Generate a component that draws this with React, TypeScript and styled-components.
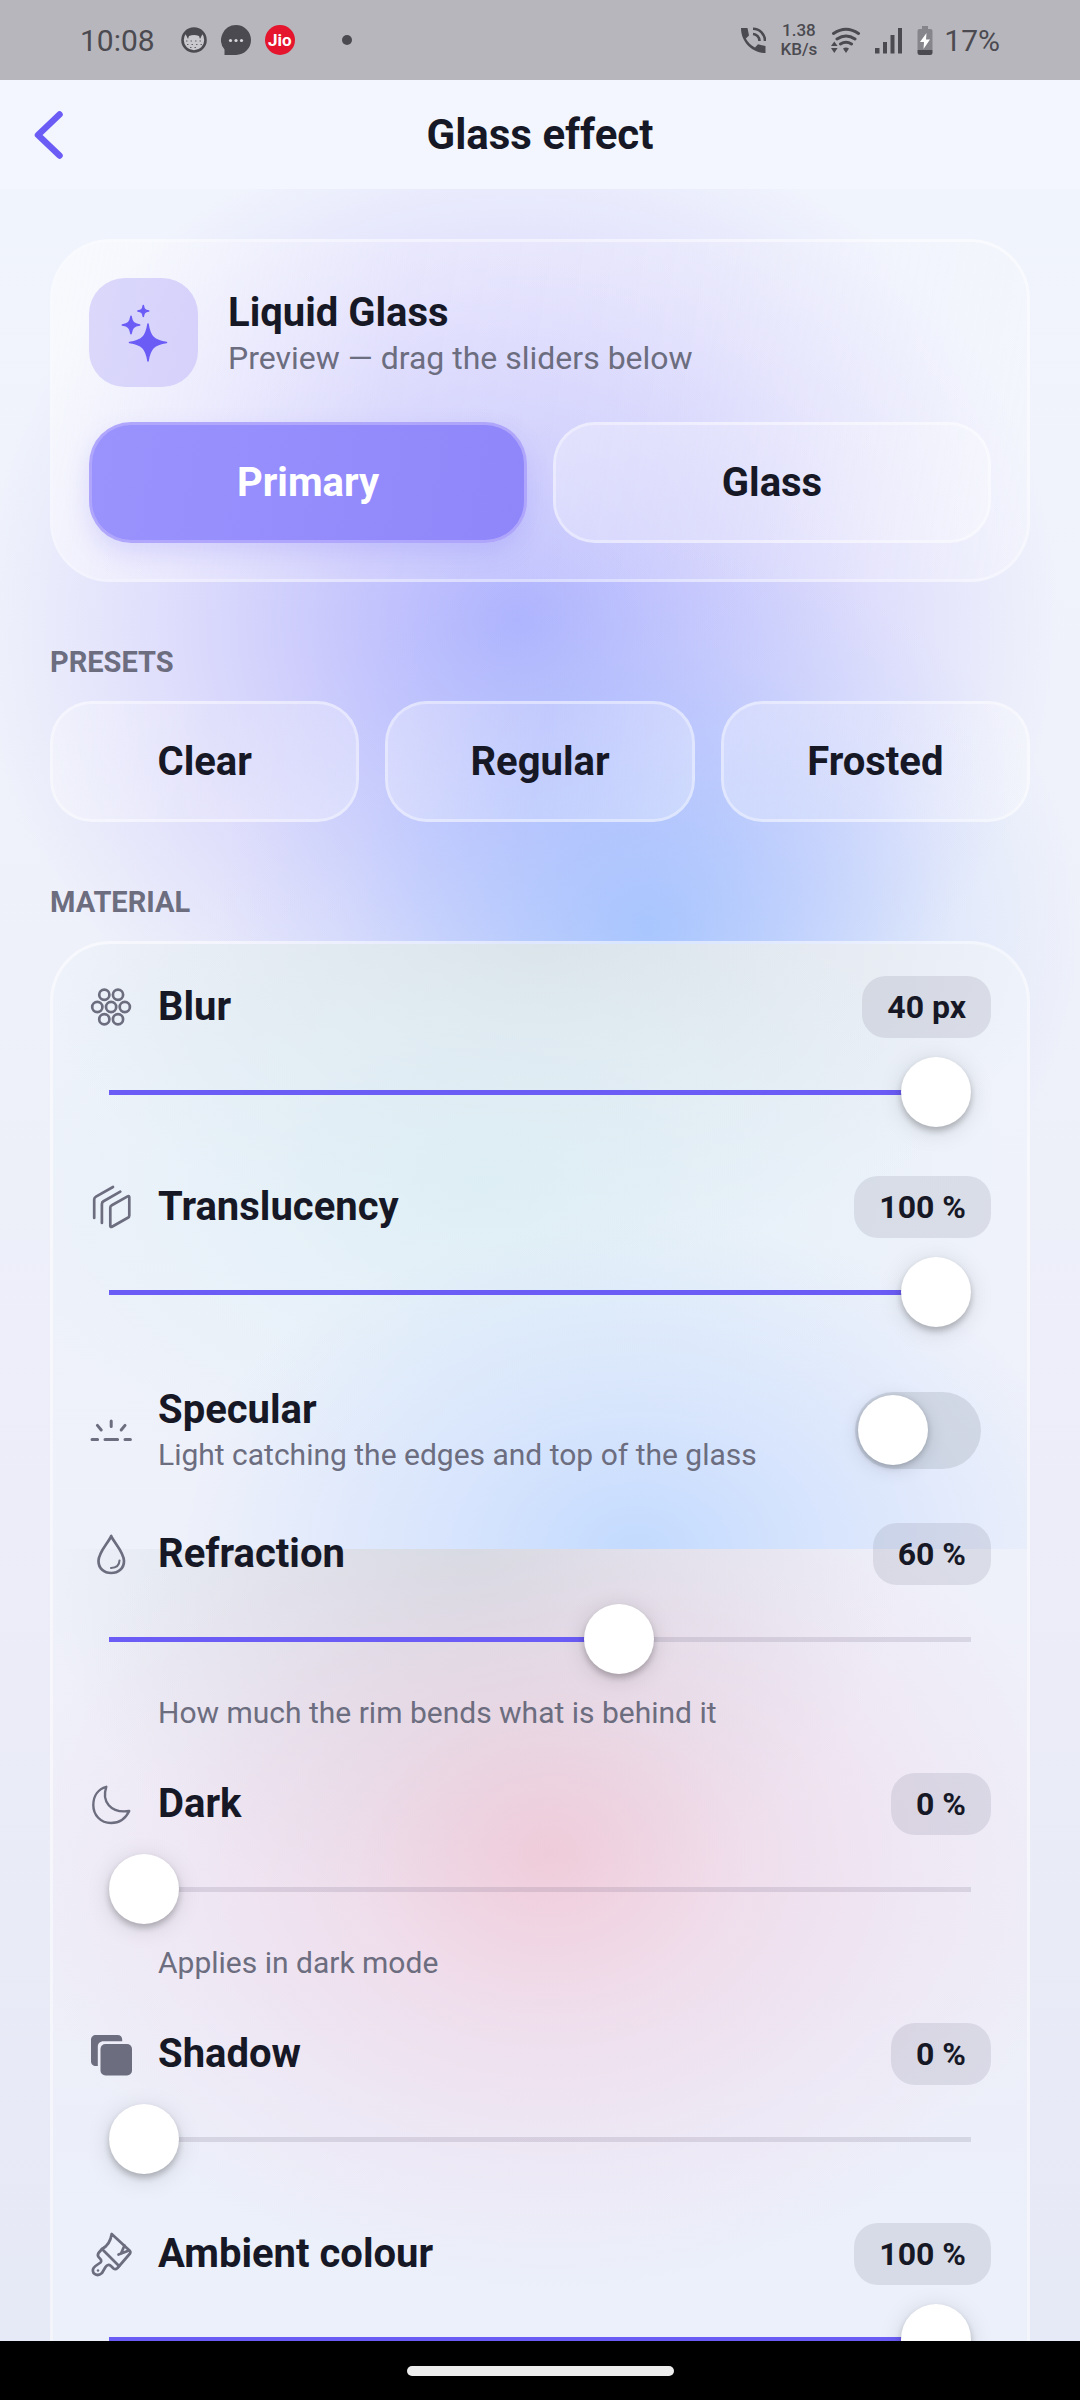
import React, { useId, useState } from "react";
import styled, { createGlobalStyle } from "styled-components";

const ink = "#171826";
const muted = "#6c6d7f";
const accent = "#6b5cf6";

const GlobalStyle = createGlobalStyle`
  *, *::before, *::after { box-sizing: border-box; }
  body { margin: 0; }
  button, input { font: inherit; }
`;

const Screen = styled.div`
  display: flex;
  flex-direction: column;
  height: 100vh;
  overflow: hidden;
  font-family: Roboto, "Noto Sans", sans-serif;
  color: ${ink};
  background:
    radial-gradient(ellipse 40% 390px at 60% 930px, rgba(150, 190, 255, 0.74) 0%, rgba(155, 190, 255, 0.48) 35%, rgba(165, 198, 255, 0.16) 72%, rgba(170, 210, 255, 0) 100%),
    radial-gradient(ellipse 50% 510px at 48% 620px, rgba(142, 146, 255, 0.66) 0%, rgba(156, 152, 255, 0.48) 32%, rgba(180, 168, 255, 0.27) 66%, rgba(200, 190, 255, 0) 100%),
    linear-gradient(180deg, #f1f5fd 0, #eff2fb 700px, #ecedf8 1500px, #e6e9f6 2340px);
`;

const StatusBar = styled.div`
  display: flex;
  flex: none;
  align-items: center;
  justify-content: space-between;
  height: 80px;
  padding: 0 80px;
  background: #b7b6bc;
  color: #4b4a50;
  font-size: 30px;
`;

const StatusGroup = styled.div<{ $gap: number }>`
  display: flex;
  align-items: center;
  gap: ${(p) => p.$gap}px;
`;

const Clock = styled.span`
  margin-right: 12px;
`;

const JioBadge = styled.span`
  width: 30px;
  border-radius: 50%;
  background: #e4152c;
  color: #fff;
  font-size: 17px;
  font-weight: 700;
  line-height: 30px;
  text-align: center;
`;

const MoreDot = styled.span`
  width: 10px;
  height: 10px;
  margin-left: 33px;
  border-radius: 50%;
  background: currentColor;
`;

const NetSpeed = styled.span`
  font-size: 17px;
  font-weight: 500;
  line-height: 19px;
  text-align: center;
`;

const Header = styled.header`
  display: grid;
  flex: none;
  grid-template-columns: 96px 1fr 96px;
  align-items: center;
  height: 109px;
  background: rgba(243, 246, 254, 0.96);
`;

const BackButton = styled.button`
  display: flex;
  align-items: center;
  height: 96px;
  padding: 0 0 0 30px;
  border: 0;
  background: none;
  color: ${accent};
`;

const PageTitle = styled.h1`
  margin: 0;
  font-size: 42px;
  line-height: 50px;
  text-align: center;
`;

const Content = styled.main`
  flex: 1;
  min-height: 0;
  overflow: hidden;
  padding: 50px 50px 0;
`;

const PreviewCard = styled.section`
  padding: 36px;
  border: 3px solid rgba(255, 255, 255, 0.5);
  border-radius: 60px;
  background: linear-gradient(100deg, rgba(255, 255, 255, 0.5) 0%, rgba(245, 240, 255, 0.26) 35%, rgba(245, 243, 255, 0.22) 65%, rgba(250, 250, 255, 0.36) 100%);
  background-clip: padding-box;
`;

const PreviewHead = styled.div`
  display: flex;
  align-items: center;
  gap: 30px;
  margin-bottom: 35px;
`;

const IconTile = styled.div`
  display: flex;
  align-items: center;
  justify-content: center;
  width: 109px;
  height: 109px;
  border-radius: 36px;
  background: linear-gradient(100deg, #dbd8fb, #d5d1fb);
  color: ${accent};
`;

const PreviewText = styled.div`
  padding-top: 2px;
`;

const Title = styled.h2`
  margin: 0;
  font-size: 40px;
  font-weight: 700;
  line-height: 48px;
`;

const Caption = styled.p<{ $large?: boolean }>`
  margin: 0;
  color: ${muted};
  font-size: ${(p) => (p.$large ? 32 : 30)}px;
  line-height: 42px;
`;

const ButtonRow = styled.div`
  display: grid;
  grid-auto-flow: column;
  grid-auto-columns: 1fr;
  gap: 26px;
`;

const GlassButton = styled.button<{ $primary?: boolean }>`
  height: 121px;
  padding: 0;
  border: 3px solid ${(p) => (p.$primary ? "rgba(178, 170, 252, 0.9)" : "rgba(255, 255, 255, 0.55)")};
  border-radius: 42px;
  background: ${(p) =>
    p.$primary
      ? "linear-gradient(100deg, #9a93fd, #8f86fa)"
      : "linear-gradient(100deg, rgba(255, 255, 255, 0.32), rgba(255, 255, 255, 0.18) 50%, rgba(255, 255, 255, 0.32))"};
  background-clip: ${(p) => (p.$primary ? "border-box" : "padding-box")};
  box-shadow: ${(p) => (p.$primary ? "0 10px 24px rgba(108, 92, 246, 0.17)" : "none")};
  color: ${(p) => (p.$primary ? "#fff" : ink)};
  font-size: 40px;
  font-weight: 700;
`;

const SectionLabel = styled.h3`
  margin: 0;
  padding: 62px 0 21px;
  color: ${muted};
  font-size: 29px;
  font-weight: 700;
  line-height: 36px;
`;

const MaterialCard = styled.section`
  display: flex;
  flex-direction: column;
  gap: 27px;
  padding: 32px 36px 60px;
  border: 3px solid rgba(255, 255, 255, 0.55);
  border-radius: 60px;
  background:
    radial-gradient(ellipse 48% 330px at 60% 605px, rgba(190, 216, 255, 0.9) 0%, rgba(200, 220, 255, 0.6) 40%, rgba(222, 230, 255, 0) 100%) top / 100% 605px no-repeat,
    radial-gradient(ellipse 54% 320px at 44% 240px, rgba(218, 238, 244, 0.78) 0%, rgba(224, 240, 247, 0.44) 55%, rgba(235, 242, 250, 0) 100%) top / 100% 605px no-repeat,
    radial-gradient(ellipse 52% 320px at 50% 0, rgba(210, 219, 224, 0.78) 0%, rgba(218, 225, 231, 0.5) 50%, rgba(235, 240, 248, 0) 100%) top / 100% 605px no-repeat,
    linear-gradient(#eff3fb, #eff1fa) top / 100% 605px no-repeat,
    radial-gradient(ellipse 54% 440px at 51% 910px, rgba(242, 192, 208, 0.72) 0%, rgba(241, 205, 224, 0.48) 38%, rgba(240, 216, 236, 0.28) 72%, rgba(240, 230, 244, 0) 100%),
    radial-gradient(ellipse 44% 380px at 43% 605px, rgba(206, 219, 223, 1) 0%, rgba(214, 222, 228, 0.72) 42%, rgba(235, 238, 247, 0) 100%),
    linear-gradient(#eff1fa 605px, #eeeef8 1000px, #ebf0fa 1300px);
  background-clip: padding-box;
`;

const Row = styled.div`
  display: block;
`;

const RowHead = styled.div`
  display: flex;
  align-items: center;
  gap: 25px;
  height: 62px;
`;

const RowLabel = styled.label`
  flex: 1;
  font-size: 40px;
  font-weight: 700;
  line-height: 48px;
`;

const ValueBadge = styled.output`
  padding: 0 25px;
  border-radius: 24px;
  background: rgba(110, 110, 135, 0.16);
  font-size: 32px;
  font-weight: 700;
  line-height: 62px;
`;

const Range = styled.input`
  display: block;
  appearance: none;
  width: calc(100% - 40px);
  height: 70px;
  margin: 19px 20px 22px;
  background: linear-gradient(to right, ${accent} var(--fill), rgba(110, 100, 130, 0.18) var(--fill)) center / 100% 5px no-repeat;

  &::-webkit-slider-thumb {
    appearance: none;
    width: 70px;
    height: 70px;
    border-radius: 50%;
    background: #fff;
    box-shadow: 0 4px 6px rgba(0, 0, 0, 0.22), 0 4px 24px rgba(0, 0, 0, 0.13);
  }
`;

const Hint = styled.p`
  margin: -4px 0 0;
  padding: 0 0 12px 69px;
  color: ${muted};
  font-size: 30px;
  line-height: 42px;
`;

const SwitchRow = styled.div`
  display: flex;
  align-items: center;
  gap: 25px;
  height: 120px;
  padding-bottom: 12px;
`;

const SwitchText = styled.div`
  display: flex;
  flex: 1;
  flex-direction: column;
  padding-top: 2px;
`;

const Switch = styled.input`
  appearance: none;
  width: 126px;
  height: 77px;
  margin: 0 10px 0 0;
  padding: 3px;
  border-radius: 39px;
  background: rgba(120, 128, 142, 0.2);

  &::before {
    content: "";
    display: block;
    width: 70px;
    height: 70px;
    border-radius: 50%;
    background: #fff;
    box-shadow: 0 2px 6px rgba(0, 0, 0, 0.2), 0 4px 20px rgba(0, 0, 0, 0.12);
  }

  &:checked { background: ${accent}; }
  &:checked::before { margin-left: auto; }
`;

const IconSvg = styled.svg`
  flex: none;
  width: 44px;
  height: 44px;
  overflow: visible;
  fill: none;
  stroke: ${muted};
  stroke-width: 2.7;
  stroke-linecap: round;
  stroke-linejoin: round;
`;

const NavBar = styled.footer`
  display: flex;
  flex: none;
  align-items: center;
  justify-content: center;
  height: 59px;
  background: #000;
`;

const HomePill = styled.span`
  width: 267px;
  height: 10px;
  border-radius: 5px;
  background: #ededed;
`;

const icons = {
  blur: (
    <>
      {[[15.3, 9.7], [29, 9.7], [8.3, 22], [22.1, 22], [35.8, 22], [15.3, 34.3], [29, 34.3]].map(([x, y]) => (
        <circle key={`${x}-${y}`} cx={x} cy={y} r="5.1" />
      ))}
    </>
  ),
  layers: (
    <>
      <path d="M21.3 22.6Q21.3 21 22.8 20.2L38.6 11.4Q40.3 10.5 40.3 12.4V30.4Q40.3 32 38.8 32.8L23 41.7Q21.3 42.6 21.3 40.7Z" />
      <path d="M12.9 38V19Q12.9 17.2 14.5 16.3L31.3 6.6" />
      <path d="M5.2 33V14.6Q5.2 12.6 7 11.6L24 2" />
    </>
  ),
  specular: (
    <g strokeWidth="3">
      <path d="M22.2 13V18.4M8.4 17.4L12.2 22M36 17.4L32.2 22M3 31.5H8.6M16 31.5H28.6M36 31.5H41.4" />
    </g>
  ),
  drop: (
    <>
      <path d="M22.2 4C20 10 9.5 20 9.5 29C9.5 36.5 15 41 22.2 41S35 36.5 35 29C35 20 24.5 10 22.2 4Z" />
      <path strokeWidth="2.1" d="M30.5 28.5Q30.3 35.6 22 36" />
    </>
  ),
  moon: <path strokeWidth="2.4" d="M17.3 4.8C12.5 19 21 31.5 40.2 29C36.5 37 29.5 41 22 41C11.5 41 4.3 33 4.3 23C4.3 13.5 9.5 7 17.3 4.8Z" />,
  shadow: (
    <g fill={muted} stroke="none">
      <rect x="11.5" y="12" width="31.5" height="31.5" rx="5" />
      <path d="M7 3H28.5C31.5 3 33.2 5 33.2 7.5V9.3H14.5C11 9.3 8.8 11.5 8.8 15V34H7C4 34 2 32.5 2 29V8C2 5 4 3 7 3Z" />
    </g>
  ),
  brush: (
    <>
      <path d="M22.7 2Q21 13 13 17L9.5 21Q8 23.5 10 25.5Q13.5 28.5 11.5 30.5L6.5 34Q2.5 37 4.5 41Q8.5 45 13 41L16.5 35Q19 31.5 22 34L24.5 36.5Q26.5 38 28.5 36L41 21.5Q42 20 40.5 18.5Z" />
      <path d="M13 17L30 34M35.5 13.5L32 21.5M40 18.5L29.5 22.5" />
      <circle cx="9" cy="38.5" r="1.2" fill={muted} stroke="none" />
    </>
  ),
};

type IconName = keyof typeof icons;

function Icon({ name }: { name: IconName }) {
  return (
    <IconSvg viewBox="0 0 44 44" aria-hidden="true">
      {icons[name]}
    </IconSvg>
  );
}

function star(x: number, y: number, r: number) {
  const k = r * 0.1;
  const m = r * 0.32;
  return `M${x} ${y - r}C${x + k} ${y - m} ${x + m} ${y - k} ${x + r} ${y}C${x + m} ${y + k} ${x + k} ${y + m} ${x} ${y + r}C${x - k} ${y + m} ${x - m} ${y + k} ${x - r} ${y}C${x - m} ${y - k} ${x - k} ${y - m} ${x} ${y - r}Z`;
}

function Sparkles() {
  return (
    <svg width="66" height="74" viewBox="0 0 66 74" fill="currentColor" stroke="currentColor" strokeWidth="1.6" strokeLinejoin="round" aria-hidden="true">
      <path d={star(37, 46.5, 18.5)} />
      <path d={star(20, 29, 8.7)} />
      <path d={star(32.3, 15, 5.4)} />
    </svg>
  );
}

interface SliderRowProps {
  icon: IconName;
  label: string;
  unit: string;
  initial: number;
  max?: number;
  hint?: string;
}

function SliderRow({ icon, label, unit, initial, max = 100, hint }: SliderRowProps) {
  const id = useId();
  const [value, setValue] = useState(initial);
  const ratio = value / max;
  const fill = ratio === 0 ? "0px" : `calc(35px + (100% - 70px) * ${ratio})`;
  return (
    <Row>
      <RowHead>
        <Icon name={icon} />
        <RowLabel htmlFor={id}>{label}</RowLabel>
        <ValueBadge htmlFor={id}>{`${value} ${unit}`}</ValueBadge>
      </RowHead>
      <Range
        id={id}
        type="range"
        min={0}
        max={max}
        value={value}
        onChange={(e) => setValue(Number(e.target.value))}
        style={{ "--fill": fill } as React.CSSProperties}
      />
      {hint && <Hint>{hint}</Hint>}
    </Row>
  );
}

function StatusIcons() {
  return (
    <StatusGroup $gap={14}>
      <svg width="26" height="27" viewBox="0 0 26 27" fill="currentColor" aria-hidden="true">
        <path d="M1 1H7.5L9 8.5L5.8 11.5C8 15.5 11 18.5 15 20.5L18 17.3L25.5 19V26C12 26 1 15 1 1Z" />
        <g fill="none" stroke="currentColor" strokeWidth="2.6">
          <path d="M13 7A7 7 0 0 1 19.5 14" />
          <path d="M13 1.8A12 12 0 0 1 25 14" />
        </g>
      </svg>
      <NetSpeed>
        1.38
        <br />
        KB/s
      </NetSpeed>
      <svg width="30" height="27" viewBox="0 0 30 27" fill="none" stroke="currentColor" strokeWidth="3" strokeLinecap="round" aria-hidden="true">
        <path d="M2.5 6.5Q15 -2 27.5 6.5M6 12Q15 6 24 12M9.5 17Q15 13.5 20.5 17" />
        <path stroke="none" fill="currentColor" d="M0 19L3.3 14.5L6.6 19ZM0 21L3.3 26L6.6 21ZM12 21.5Q15 19.5 18 21.5L15 26Z" />
      </svg>
      <svg width="28" height="27" viewBox="0 0 28 27" fill="currentColor" aria-hidden="true">
        <path d="M0 21H4.5V26.5H0ZM8 15H12V26.5H8ZM15.5 8H19.5V26.5H15.5ZM23 1H27V26.5H23Z" />
      </svg>
      <svg width="16" height="30" viewBox="0 0 16 30" aria-hidden="true">
        <path fill="#86858b" d="M5 1H11V4H13.5Q15.5 4 15.5 6V25H.5V6Q.5 4 2.5 4H5Z" />
        <path fill="currentColor" d="M.5 25H15.5V27.5Q15.5 30 13 30H3Q.5 30 .5 27.5Z" />
        <path fill="#fff" d="M9.5 8L3 17H7L6.5 24L13 14.5H9Z" />
      </svg>
    </StatusGroup>
  );
}

export default function App() {
  const [specular, setSpecular] = useState(false);
  return (
    <>
      <GlobalStyle />
      <Screen>
        <StatusBar>
          <StatusGroup $gap={14}>
            <Clock>10:08</Clock>
            <svg width="26" height="26" viewBox="0 0 26 26" aria-hidden="true">
              <circle cx="13" cy="13" r="11.5" fill="#c9c8cd" stroke="currentColor" strokeWidth="2.6" />
              <path fill="currentColor" d="M4 6Q13 -2 22 6L19 12L18 9Q13 7 8 9L7 12Z" />
              <path fill="none" stroke="currentColor" strokeWidth="0.8" strokeDasharray="1.5 3" d="M5 14H22M6 17.5H21M9 20.5H18" />
            </svg>
            <svg width="30" height="30" viewBox="0 0 30 30" fill="currentColor" aria-hidden="true">
              <path d="M15 0A15 15 0 1 1 15 30H3.5V24.5A15 15 0 0 1 15 0Z" />
              <g fill="#d8d7dc">
                <circle cx="9.5" cy="15.5" r="1.6" />
                <circle cx="15" cy="15.5" r="1.6" />
                <circle cx="20.5" cy="15.5" r="1.6" />
              </g>
            </svg>
            <JioBadge>Jio</JioBadge>
            <MoreDot />
          </StatusGroup>
          <StatusGroup $gap={11}>
            <StatusIcons />
            <span>17%</span>
          </StatusGroup>
        </StatusBar>

        <Header>
          <BackButton aria-label="Back">
            <svg width="36" height="50" viewBox="0 0 36 50" fill="none" stroke="currentColor" strokeWidth="6.5" strokeLinecap="round" strokeLinejoin="round" aria-hidden="true">
              <path d="M29.5 4.5L8 25L29.5 45.5" />
            </svg>
          </BackButton>
          <PageTitle>Glass effect</PageTitle>
        </Header>

        <Content>
          <PreviewCard>
            <PreviewHead>
              <IconTile>
                <Sparkles />
              </IconTile>
              <PreviewText>
                <Title>Liquid Glass</Title>
                <Caption $large>Preview — drag the sliders below</Caption>
              </PreviewText>
            </PreviewHead>
            <ButtonRow>
              <GlassButton $primary>Primary</GlassButton>
              <GlassButton>Glass</GlassButton>
            </ButtonRow>
          </PreviewCard>

          <SectionLabel>PRESETS</SectionLabel>
          <ButtonRow>
            <GlassButton>Clear</GlassButton>
            <GlassButton>Regular</GlassButton>
            <GlassButton>Frosted</GlassButton>
          </ButtonRow>

          <SectionLabel>MATERIAL</SectionLabel>
          <MaterialCard>
            <SliderRow icon="blur" label="Blur" unit="px" initial={40} max={40} />
            <SliderRow icon="layers" label="Translucency" unit="%" initial={100} />
            <SwitchRow>
              <Icon name="specular" />
              <SwitchText>
                <RowLabel htmlFor="specular">Specular</RowLabel>
                <Caption>Light catching the edges and top of the glass</Caption>
              </SwitchText>
              <Switch id="specular" type="checkbox" role="switch" checked={specular} onChange={(e) => setSpecular(e.target.checked)} />
            </SwitchRow>
            <SliderRow icon="drop" label="Refraction" unit="%" initial={60} hint="How much the rim bends what is behind it" />
            <SliderRow icon="moon" label="Dark" unit="%" initial={0} hint="Applies in dark mode" />
            <SliderRow icon="shadow" label="Shadow" unit="%" initial={0} />
            <SliderRow icon="brush" label="Ambient colour" unit="%" initial={100} />
          </MaterialCard>
        </Content>

        <NavBar>
          <HomePill />
        </NavBar>
      </Screen>
    </>
  );
}
